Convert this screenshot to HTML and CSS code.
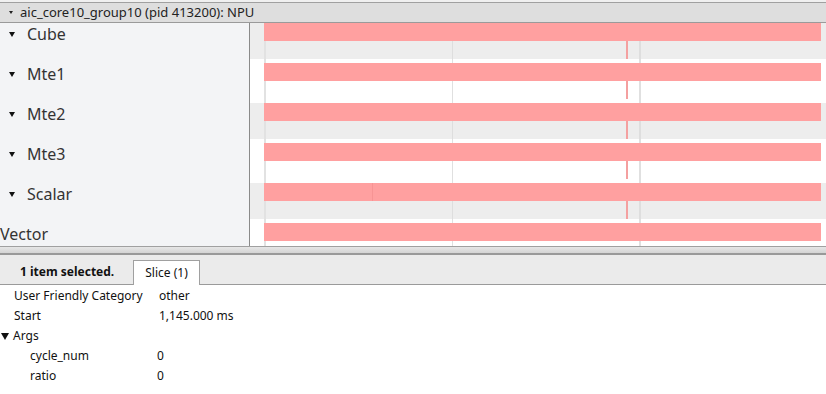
FILE: index.html
```html
<!DOCTYPE html>
<html>
<head>
<meta charset="utf-8">
<link rel="stylesheet" href="styles.css">
</head>
<body>
<div class="topline"></div>
<div class="header"><span class="tri-s"></span><span class="htitle">aic_core10_group10 (pid 413200): NPU</span></div>
<div class="main">
  <div class="labels">
    <div class="label"><span class="tri"></span>Cube</div>
    <div class="label"><span class="tri"></span>Mte1</div>
    <div class="label"><span class="tri"></span>Mte2</div>
    <div class="label"><span class="tri"></span>Mte3</div>
    <div class="label"><span class="tri"></span>Scalar</div>
    <div class="label nolead">Vector</div>
  </div>
  <div class="tracks">
    <div class="track grey"><div class="band"><div class="bar"></div><div class="below"><div class="mark"></div></div></div></div>
    <div class="track"><div class="band"><div class="bar"></div><div class="below"><div class="mark"></div></div></div></div>
    <div class="track grey"><div class="band"><div class="bar"></div><div class="below"><div class="mark"></div></div></div></div>
    <div class="track"><div class="band"><div class="bar"></div><div class="below"><div class="mark"></div></div></div></div>
    <div class="track grey"><div class="band"><div class="bar split"></div><div class="below"><div class="mark"></div></div></div></div>
    <div class="track last"><div class="band"><div class="bar"></div></div></div>
  </div>
</div>
<div class="divider"></div>
<div class="tabbar">
  <span class="sel">1 item selected.</span>
  <span class="tab">Slice (1)</span>
</div>
<div class="details">
  <div class="row"><span class="k">User Friendly Category</span><span class="v">other</span></div>
  <div class="row"><span class="k">Start</span><span class="v">1,145.000 ms</span></div>
  <div class="row group"><span class="gtri"></span><span>Args</span></div>
  <div class="row sub"><span class="k">cycle_num</span><span class="v">0</span></div>
  <div class="row sub"><span class="k">ratio</span><span class="v">0</span></div>
</div>
</body>
</html>
```
FILE: styles.css
```css
* { box-sizing: border-box; }
html, body { margin: 0; padding: 0; }
body {
  width: 826px;
  height: 394px;
  overflow: hidden;
  background: #fff;
  font-family: "Noto Sans", "Open Sans", sans-serif;
  color: #222;
}
.topline {
  height: 3px;
  background: #f0f0f0;
  border-bottom: 1px solid #a0a0a0;
}
.header {
  height: 20px;
  background: #dedede;
  border-bottom: 1px solid #9a9a9a;
  display: flex;
  align-items: center;
  font-size: 13px;
  line-height: 19px;
  color: #222;
}
.tri-s {
  width: 0;
  height: 0;
  margin-left: 9px;
  margin-right: 7px;
  border-left: 2px solid transparent;
  border-right: 2px solid transparent;
  border-top: 3px solid #222;
}
.main {
  display: flex;
  height: 223px;
}
.labels {
  width: 250px;
  flex: none;
  background: #f3f4f6;
  border-right: 1px solid #8a8a8a;
  overflow: hidden;
}
.label {
  height: 40px;
  display: flex;
  align-items: flex-start;
  font-size: 16px;
  line-height: 22px;
  color: #333;
  white-space: nowrap;
}
.label .tri {
  flex: none;
  width: 0;
  height: 0;
  margin-top: 9px;
  margin-left: 9px;
  margin-right: 12px;
  border-left: 3.5px solid transparent;
  border-right: 3.5px solid transparent;
  border-top: 5px solid #111;
}
.label.nolead { height: 23px; }
.tracks {
  flex: 1;
  display: flex;
  flex-direction: column;
}
.track {
  height: 40px;
  flex: none;
  background:
    linear-gradient(#e2e2e2, #e2e2e2) 14px 0 / 2px 100% no-repeat,
    linear-gradient(#e0e0e0, #e0e0e0) 202px 0 / 1px 100% no-repeat,
    linear-gradient(#e0e0e0, #e0e0e0) 389px 0 / 2px 100% no-repeat,
    #fff;
}
.track.last { height: 23px; }
.band { height: 36px; }
.track.grey .band {
  background:
    linear-gradient(#e2e2e2, #e2e2e2) 14px 0 / 2px 100% no-repeat,
    linear-gradient(#dedede, #dedede) 202px 0 / 1px 100% no-repeat,
    linear-gradient(#dedede, #dedede) 389px 0 / 2px 100% no-repeat,
    #ededed;
}
.bar {
  height: 18px;
  margin-left: 14px;
  width: 557px;
  background: #ffa0a0;
}
.bar.split {
  background:
    linear-gradient(#f79494, #f79494) 108px 0 / 1px 100% no-repeat,
    #ffa0a0;
}
.below {
  height: 18px;
  padding-left: 376px;
}
.mark {
  width: 2px;
  height: 18px;
  background: #f4a0a0;
}
.divider {
  height: 9px;
  border-top: 1px solid #a0a0a0;
  border-bottom: 2px solid #999;
  background: linear-gradient(#e6e6e6, #d4d4d4);
}
.tabbar {
  height: 30px;
  background: #ebebeb;
  border-bottom: 1px solid #9a9a9a;
  display: flex;
  align-items: flex-end;
  font-size: 12px;
}
.sel {
  font-weight: bold;
  padding-left: 20px;
  width: 133px;
  line-height: 24px;
  color: #111;
}
.tab {
  height: 25px;
  width: 67px;
  margin-bottom: -1px;
  background: #fff;
  border: 1px solid #a0a0a0;
  border-bottom: none;
  text-align: center;
  line-height: 23px;
  color: #111;
}
.details {
  padding-top: 1px;
  font-size: 12px;
  color: #111;
}
.row {
  height: 20px;
  line-height: 20px;
  display: flex;
  align-items: center;
  white-space: nowrap;
}
.row .k { width: 159px; padding-left: 14px; flex: none; }
.row.sub .k { width: 157px; padding-left: 30px; }
.gtri {
  flex: none;
  width: 0;
  height: 0;
  margin-left: 1px;
  margin-right: 4px;
  border-left: 4px solid transparent;
  border-right: 4px solid transparent;
  border-top: 7px solid #111;
}
```
